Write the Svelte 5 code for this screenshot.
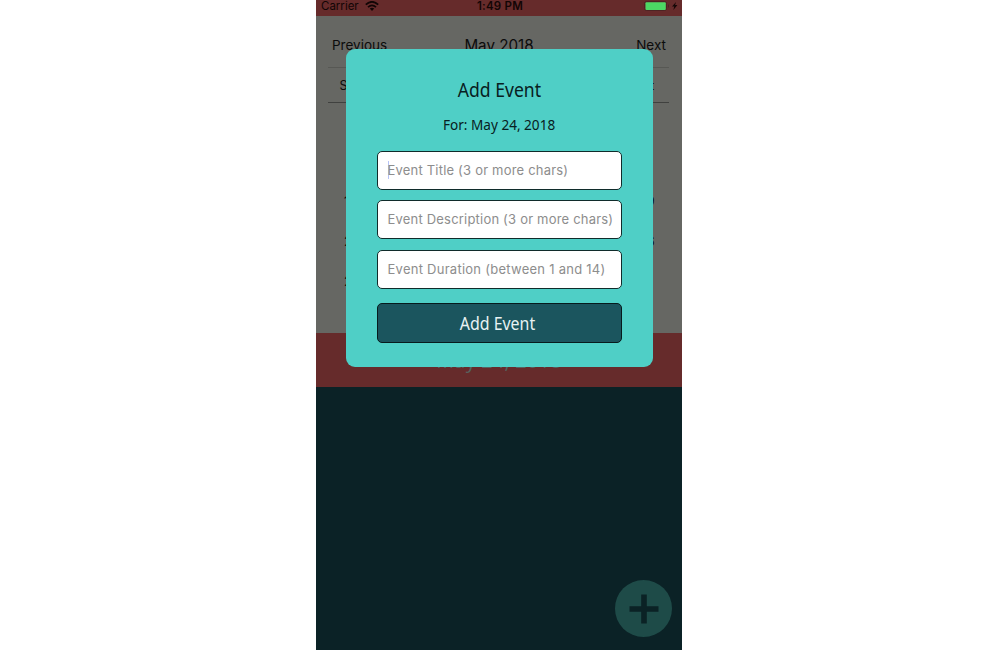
<script>
  const days = ['Sun', '', '', '', '', '', 'Sat'];
  const weeks = [
    ['', ''],
    ['', ''],
    ['13', '19'],
    ['20', '26'],
    ['27', '']
  ];
  const fields = [
    'Event Title (3 or more chars)',
    'Event Description (3 or more chars)',
    'Event Duration (between 1 and 14)'
  ];
</script>

<main>
  <div class="phone">
    <header class="status">
      <div class="carrier">
        <span>Carrier</span>
        <svg width="14" height="10" viewBox="0 0 14 10">
          <g fill="none" stroke="#120505" stroke-width="1.8">
            <path d="M.8 3.7Q7-2 13.2 3.7" />
            <path d="M3 6.2Q7 2.6 11 6.2" />
          </g>
          <path d="M4.8 7.6Q7 5.8 9.2 7.6L7 10Z" fill="#120505" />
        </svg>
      </div>
      <b>1:49 PM</b>
      <svg class="battery" width="35" height="12" viewBox="0 0 35 12">
        <rect x=".5" y="1.5" width="22" height="9" rx="2" fill="none" stroke="#4c2424" />
        <rect x="1.5" y="2.2" width="20.3" height="7.7" rx="1" fill="#4cd964" />
        <path d="M24 4q2 2 0 4z" fill="#4c2424" />
        <path d="M32 2l-4 4.6h2.2L29.4 10l4-5h-2.3z" fill="#160707" />
      </svg>
    </header>
    <section class="calendar">
      <nav><span>Previous</span><span class="month">May 2018</span><span>Next</span></nav>
      <div class="week">{#each days as d}<span>{d}</span>{/each}</div>
      {#each weeks as [first, last]}
        <div class="row"><span>{first}</span><span>{last}</span></div>
      {/each}
    </section>
    <div class="date"><span>May 24, 2018</span></div>
    <section class="events">
      <div class="fab">
        <svg width="30" height="30" viewBox="0 0 30 30"><path d="M12.2 0.5h5.6v11.7h11.7v5.6H17.8v11.7h-5.6V17.8H.5v-5.6h11.7z" fill="#0b2225" /></svg>
      </div>
    </section>
    <form class="modal">
      <h1><span>Add Event</span></h1>
      <p><span>For: May 24, 2018</span></p>
      {#each fields as f, i}
        <div class="field">{#if i === 0}<i class="caret"></i>{/if}<span>{f}</span></div>
      {/each}
      <button type="button"><span>Add Event</span></button>
    </form>
  </div>
</main>

<style>
  :global(body) { background: #fff; }
  main { height: 650px; display: flex; justify-content: center; overflow: hidden; padding-right: 2px; box-sizing: border-box; font-family: Inter, sans-serif; }
  .phone { position: relative; width: 366px; height: 650px; display: flex; flex-direction: column; background: #0b2226; color: #0c0c0c; }
  .status { height: 16px; flex: none; background: #662b2b; display: grid; grid-template-columns: 1fr auto 1fr; box-sizing: border-box; padding: 0 3px 4px 5px; align-items: center; font-size: 11.5px; line-height: 12px; color: #120505; }
  .status b { font-weight: 600; font-size: 11.5px; letter-spacing: .25px; }
  .carrier { display: flex; align-items: center; gap: 6px; letter-spacing: 0; }
  .battery { justify-self: end; }
  .calendar { height: 317px; flex: none; box-sizing: border-box; background: #666763; padding: 0 13px 0 12px; overflow: hidden; }
  nav { height: 51px; display: grid; grid-template-columns: 1fr auto 1fr; align-items: center; padding: 7px 3px 0 4px; box-sizing: border-box; font-size: 13.5px; }
  nav span:last-child { text-align: right; }
  .month { font-size: 15.2px; letter-spacing: 0; }
  .week { height: 36px; box-sizing: border-box; border-top: 1px solid #575854; border-bottom: 1px solid #40413f; display: grid; grid-template-columns: repeat(7, 1fr); align-items: center; text-align: center; font-size: 12.5px; }
  .week span:first-child { margin-left: -3px; }
  .row { height: 40.3px; display: flex; justify-content: space-between; line-height: 34px; font-size: 13px; padding: 0 14.5px 0 16px; }
  .date { height: 54px; flex: none; background: #662b2b; color: #57625f; font: 20px/55px "Open Sans", sans-serif; text-align: center; letter-spacing: .2px; }
  .events { flex: 1; display: flex; align-items: flex-end; justify-content: flex-end; padding: 0 10px 13px; }
  .fab { width: 57px; height: 57px; border-radius: 50%; background: #1e4b48; display: flex; align-items: center; justify-content: center; }
  .modal { position: absolute; left: 30px; top: 49.4px; width: 307px; height: 317.8px; box-sizing: border-box; border-radius: 9px; background: #4fcfc6; padding: 25.6px 31px 0 30.5px; display: flex; flex-direction: column; }
  h1, p { margin: 0; text-align: center; font-family: "Noto Sans", sans-serif; font-weight: 400; color: #082021; }
  h1 { font-size: 20px; height: 30px; line-height: 30px; }
  h1 span, p span, button span { display: inline-block; white-space: nowrap; }
  h1 span { transform: scaleX(.88); }
  p { font-size: 14.3px; height: 20px; line-height: 18px; margin: 11px 0 15px; }
  p span { transform: scaleX(.95); }
  .field { height: 39px; flex: none; box-sizing: border-box; border: 1.4px solid #102c2b; border-radius: 5px; background: #fff; margin-bottom: 10.3px; padding: 0 10px 1.5px; display: flex; align-items: center; font-size: 13px; letter-spacing: .2px; color: #8d8d8d; white-space: nowrap; }
  .field:nth-of-type(3) { padding-bottom: 0; letter-spacing: .26px; }
  .caret { width: 1px; height: 18px; margin-right: -1px; background: #b6c3f8; }
  button { height: 40px; margin-top: 4px; padding: 0 3px 0 0; border: 1.4px solid #071b1d; border-radius: 5px; background: #1b555e; color: #e8f2f3; font: 17.5px "Noto Sans", sans-serif; }
  button span { transform: scaleX(.91); }
</style>
